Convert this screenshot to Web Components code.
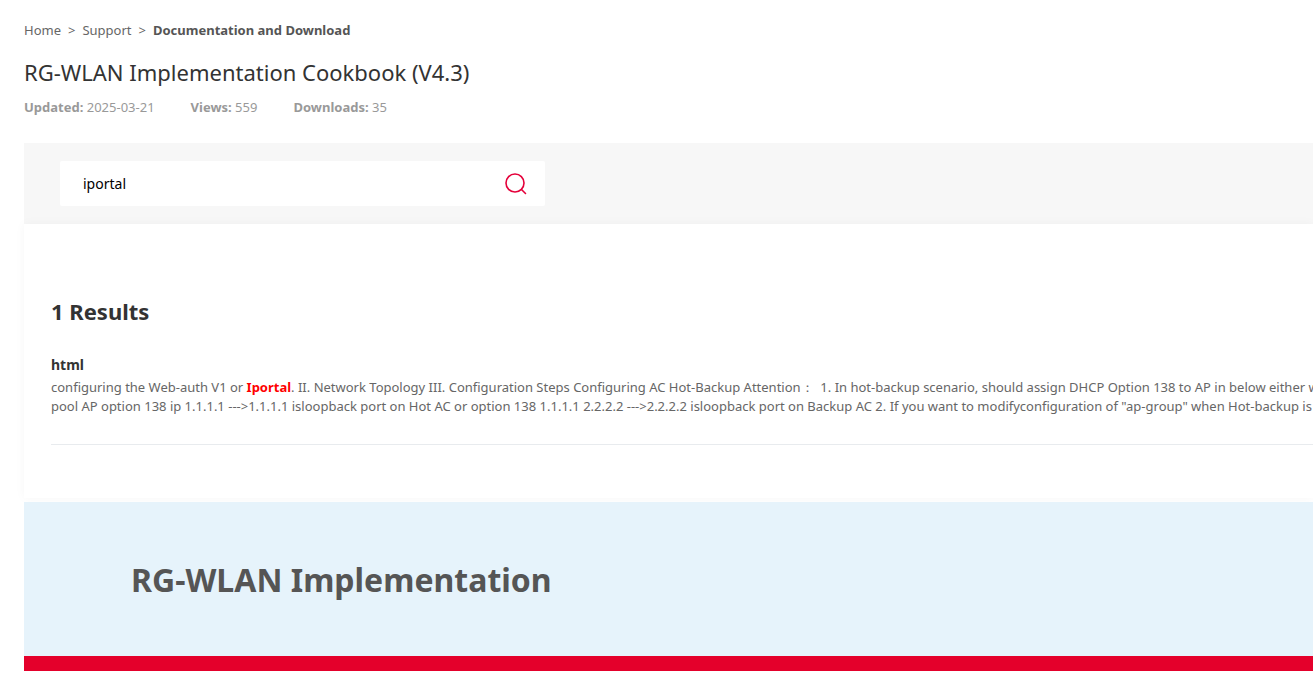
<!DOCTYPE html>
<html lang="en">
<head>
<meta charset="utf-8">
<title>RG-WLAN Implementation Cookbook (V4.3)</title>
<style>
  html, body { margin: 0; height: 100%; overflow: hidden; background: #fff; }
  body { font-family: "Noto Sans", sans-serif; }
</style>
</head>
<body>
<doc-page>
  <doc-breadcrumb>
    <a slot="crumb">Home</a>
    <a slot="crumb">Support</a>
    <b slot="current">Documentation and Download</b>
  </doc-breadcrumb>
  <doc-header title-text="RG-WLAN Implementation Cookbook (V4.3)" updated="2025-03-21" views="559" downloads="35"></doc-header>
  <doc-search value="iportal"></doc-search>
  <doc-results count="1">
    <doc-result heading="html">
      <span>configuring the Web-auth V1 or <strong style="color:#f00">Iportal</strong>. II. Network Topology III. Configuration Steps Configuring AC Hot-Backup Attention：&nbsp; 1. In hot-backup scenario, should assign DHCP Option 138 to AP in below either ways: ip</span><br>
      <span>pool AP option 138 ip 1.1.1.1 ---&gt;1.1.1.1 isloopback port on Hot AC or option 138 1.1.1.1 2.2.2.2 ---&gt;2.2.2.2 isloopback port on Backup AC 2. If you want to modifyconfiguration of "ap-group" when Hot-backup is done,</span>
    </doc-result>
  </doc-results>
  <doc-banner>RG-WLAN Implementation</doc-banner>
</doc-page>

<script>
class DocPage extends HTMLElement {
  connectedCallback() {
    const root = this.attachShadow({ mode: "open" });
    root.innerHTML = `
      <style>
        :host { display: block; padding: 22px 0 0 24px; width: 1289px; overflow: hidden; }
      </style>
      <slot></slot>`;
  }
}

class DocBreadcrumb extends HTMLElement {
  connectedCallback() {
    const root = this.attachShadow({ mode: "open" });
    root.innerHTML = `
      <style>
        :host { display: flex; font-size: 13px; line-height: 17px; color: #666; }
        .sep { margin: 0 7px; }
        ::slotted(b) { color: #555; font-weight: 700; }
      </style>
      <span id="crumbs"></span>
      <slot name="current"></slot>
      <slot name="crumb" hidden></slot>`;
    // each crumb gets a > after it
    const crumbs = root.querySelector("#crumbs");
    this.querySelectorAll("[slot=crumb]").forEach((c) => {
      crumbs.append(c.textContent);
      const sep = document.createElement("span");
      sep.className = "sep";
      sep.textContent = ">";
      crumbs.append(sep);
    });
  }
}

class DocHeader extends HTMLElement {
  connectedCallback() {
    const root = this.attachShadow({ mode: "open" });
    root.innerHTML = `
      <style>
        :host { display: block; }
        h1 { margin: 18px 0 0; font-size: 22px; line-height: 30px; font-weight: 400; color: #333; }
        .meta { display: flex; gap: 36px; margin-top: 11px; font-size: 13px; line-height: 18px; color: #999; }
      </style>
      <h1>${this.getAttribute("title-text")}</h1>
      <div class="meta">
        <span><b>Updated:</b> ${this.getAttribute("updated")}</span>
        <span><b>Views:</b> ${this.getAttribute("views")}</span>
        <span><b>Downloads:</b> ${this.getAttribute("downloads")}</span>
      </div>`;
  }
}

class DocSearch extends HTMLElement {
  connectedCallback() {
    const root = this.attachShadow({ mode: "open" });
    root.innerHTML = `
      <style>
        :host { display: block; margin-top: 27px; padding: 18px 36px; background: #f7f7f7; }
        .box { display: flex; align-items: center; justify-content: space-between; box-sizing: border-box;
               width: 485px; height: 45px; padding: 0 17px 0 23px; background: #fff; border-radius: 2px; }
        .value { font-size: 14px; color: #000; }
        svg { display: block; }
      </style>
      <div class="box">
        <span class="value">${this.getAttribute("value")}</span>
        <svg width="24" height="24" viewBox="0 0 24 24" fill="none" stroke="#e4003a" stroke-width="1.6">
          <circle cx="11" cy="11" r="9"/>
          <path d="M17.5 17.5l4 4" stroke-linecap="round"/>
        </svg>
      </div>`;
  }
}

class DocResults extends HTMLElement {
  connectedCallback() {
    const root = this.attachShadow({ mode: "open" });
    root.innerHTML = `
      <style>
        :host { display: block; box-sizing: border-box; height: 274px; padding: 72px 0 0 27px; background: #fff;
                box-shadow: 0 0 10px rgba(0,0,0,.04); position: relative; }
        h2 { margin: 0 0 29px; font-size: 22px; line-height: 30px; font-weight: 700; color: #333; }
      </style>
      <h2>${this.getAttribute("count")} Results</h2>
      <slot></slot>`;
  }
}

class DocResult extends HTMLElement {
  connectedCallback() {
    const root = this.attachShadow({ mode: "open" });
    root.innerHTML = `
      <style>
        :host { display: block; padding-bottom: 28px; border-bottom: 1px solid #e8ebee; }
        h3 { margin: 0 0 3px; font-size: 14px; line-height: 20px; font-weight: 700; color: #333; }
        .text { font-size: 13px; line-height: 19px; color: #666; white-space: nowrap; overflow: hidden; }
      </style>
      <h3>${this.getAttribute("heading")}</h3>
      <div class="text"><slot></slot></div>`;
  }
}

class DocBanner extends HTMLElement {
  connectedCallback() {
    const root = this.attachShadow({ mode: "open" });
    root.innerHTML = `
      <style>
        :host { display: block; margin-top: 4px; background: #e6f3fb; position: relative; z-index: 1; }
        .inner { display: flex; align-items: center; height: 154px; padding-left: 107px; box-sizing: border-box;
                 font-size: 32px; font-weight: 700; color: #555; }
        .bar { height: 15px; background: #e4002b; }
      </style>
      <div class="inner"><slot></slot></div>
      <div class="bar"></div>`;
  }
}

customElements.define("doc-page", DocPage);
customElements.define("doc-breadcrumb", DocBreadcrumb);
customElements.define("doc-header", DocHeader);
customElements.define("doc-search", DocSearch);
customElements.define("doc-results", DocResults);
customElements.define("doc-result", DocResult);
customElements.define("doc-banner", DocBanner);
</script>
</body>
</html>
